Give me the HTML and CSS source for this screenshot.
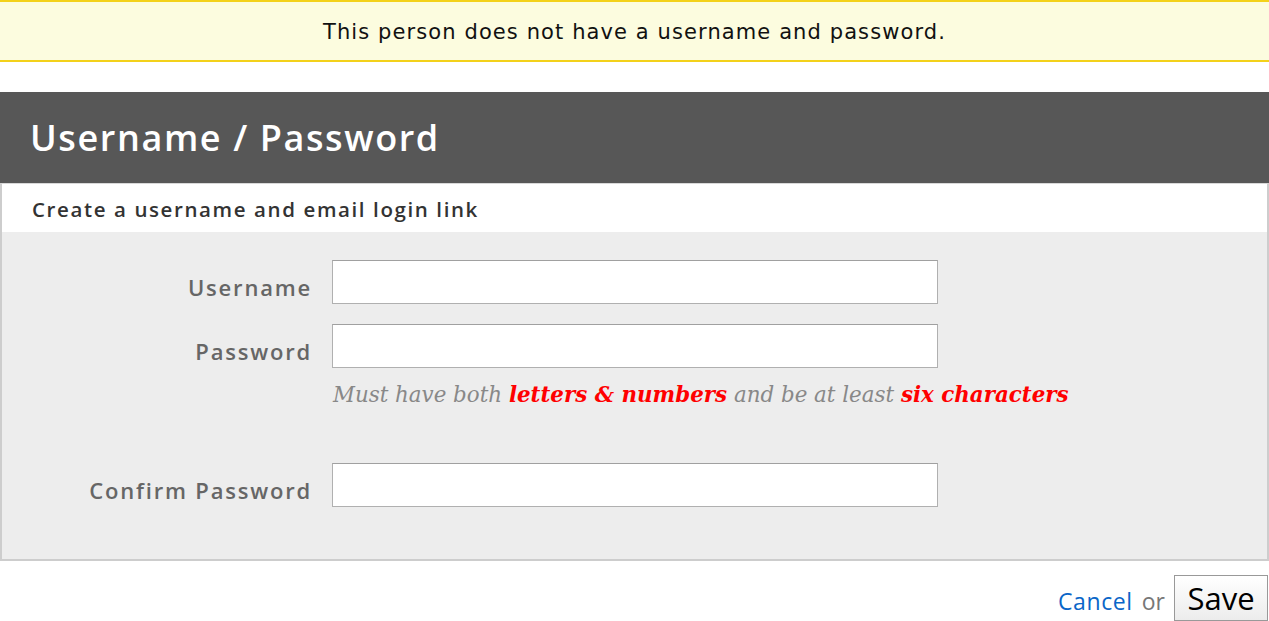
FILE: index.html
```html
<!DOCTYPE html>
<html lang="en">
<head>
    <meta charset="UTF-8">
    <title>Username / Password</title>
    <link rel="stylesheet" href="styles.css">
</head>
<body>
    <div class="notice">This person does not have a username and password.</div>

    <div class="section">
        <h1 class="section-title">Username / Password</h1>

        <div class="panel">
            <div class="panel-sub">Create a username and email login link</div>

            <form class="panel-body">
                <div class="row">
                    <label for="username">Username</label>
                    <input type="text" id="username">
                </div>
                <div class="row">
                    <label for="password">Password</label>
                    <input type="password" id="password">
                </div>
                <p class="hint">Must have both <strong>letters &amp; numbers</strong> and be at least <strong>six characters</strong></p>
                <div class="row row-confirm">
                    <label for="confirm">Confirm Password</label>
                    <input type="password" id="confirm">
                </div>
            </form>
        </div>

        <div class="actions">
            <a href="#" class="cancel">Cancel</a>
            <span class="or">or</span>
            <button type="button" class="save">Save</button>
        </div>
    </div>
</body>
</html>
```

FILE: styles.css
```css
body {
    margin: 0;
    font-family: 'DejaVu Sans', sans-serif;
    background: white;
    color: #333;
}
.notice {
    height: 58px;
    line-height: 60px;
    text-align: center;
    background: #fcfcdf;
    border-top: 2px solid #f3d11a;
    border-bottom: 2px solid #f3d11a;
    font-size: 21px;
    letter-spacing: 1.1px;
    color: #111;
}
.section {
    margin-top: 30px;
}
.section-title {
    margin: 0;
    height: 91px;
    line-height: 91px;
    padding-left: 30px;
    background: #575757;
    color: white;
    font-family: 'Open Sans', sans-serif;
    font-size: 36px;
    font-weight: 600;
    letter-spacing: 1.6px;
}
.panel {
    border: 2px solid #cdcdcd;
    border-top: 1px solid #d8d8d8;
}
.panel-sub {
    height: 48px;
    line-height: 50px;
    padding-left: 30px;
    background: white;
    font-family: 'Open Sans', sans-serif;
    font-size: 20.5px;
    font-weight: 600;
    letter-spacing: 1.6px;
    color: #333;
}
.panel-body {
    margin: 0;
    padding: 28px 0 52px;
    background: #ededed;
}
.row {
    display: grid;
    grid-template-columns: 308px 606px;
    column-gap: 22px;
    align-items: center;
    margin-bottom: 20px;
}
.row label {
    margin-right: -2px;
    text-align: right;
    font-family: 'Open Sans', sans-serif;
    font-size: 22px;
    font-weight: 600;
    letter-spacing: 1.8px;
    color: #666;
    padding-top: 9px;
}
.row input {
    box-sizing: border-box;
    height: 44px;
    margin: 0;
    border: 1px solid #b0b0b0;
    border-top-color: #a0a0a0;
    background: white;
    font-size: 18px;
    padding: 0 8px;
}
.hint {
    margin: -6px 0 0 331px;
    height: 81px;
    font-family: 'DejaVu Serif', serif;
    font-style: italic;
    font-size: 21.4px;
    color: #888;
}
.hint strong {
    color: #f00;
}
.row-confirm {
    margin-bottom: 0;
}
.actions {
    display: flex;
    justify-content: flex-end;
    align-items: center;
    gap: 9px;
    margin-top: 14px;
}
.cancel {
    color: #0a66c8;
    text-decoration: none;
    font-family: 'Open Sans', sans-serif;
    font-size: 23px;
    letter-spacing: 0.6px;
    padding-top: 6px;
}
.or {
    color: #777;
    font-family: 'Open Sans', sans-serif;
    font-size: 23px;
    padding-top: 6px;
}
.save {
    height: 46px;
    width: 94px;
    margin-right: 1px;
    border: 1px solid #999;
    background: linear-gradient(#fff, #ececec);
    font-family: 'Open Sans', sans-serif;
    font-size: 31px;
    color: #000;
    padding: 0;
}
```
